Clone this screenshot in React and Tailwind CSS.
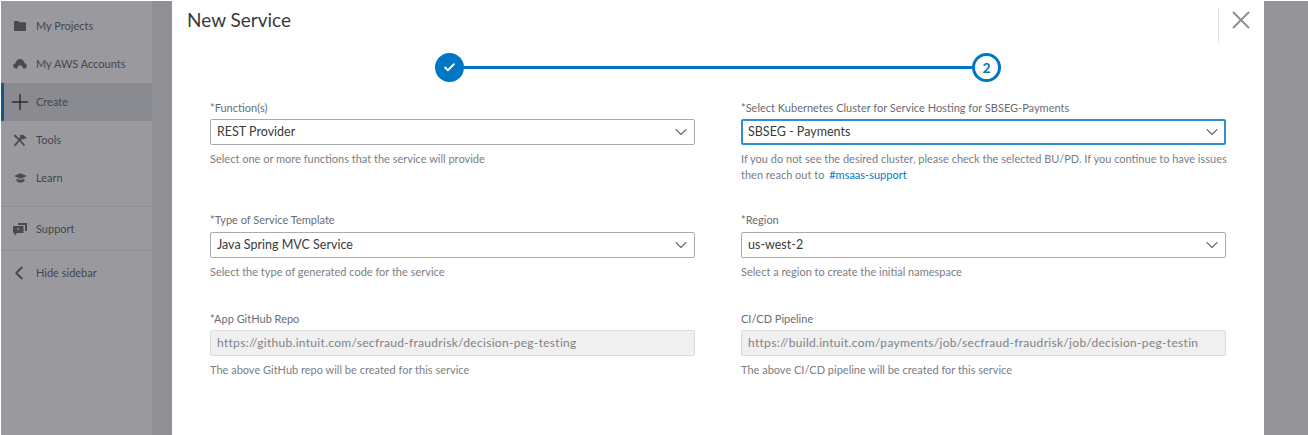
import { ChevronDown, ChevronLeft, Plus, X, Check } from 'lucide-react';

function FolderIcon() {
  return (
    <svg width="12" height="10" viewBox="0 0 12 10" className="text-[#4a4b50]">
      <path fill="currentColor" d="M0 1c0-.6.4-1 1-1h3.2l1 1.2H11c.6 0 1 .4 1 1V9c0 .6-.4 1-1 1H1c-.6 0-1-.4-1-1z" />
    </svg>
  );
}

function CloudIcon() {
  return (
    <svg width="14" height="10" viewBox="0 0 15 11" className="text-[#4a4b50]">
      <path fill="currentColor" d="M3.2 10.5C1.4 10.5 0 9.3 0 7.7 0 6.3 1 5.2 2.4 5 2.9 2.1 5 0 7.6 0c2.4 0 4.4 1.8 5 4.6 1.4.3 2.4 1.5 2.4 3 0 1.6-1.2 2.9-2.8 2.9h-1.4c0-2-1.5-3.6-3.2-3.6S4.6 8.5 4.6 10.5z" />
    </svg>
  );
}

function ToolsIcon() {
  return (
    <svg width="14" height="13" viewBox="0 0 15 14" className="text-[#4a4b50]">
      <path fill="currentColor" d="M1 1.5 2.4.5l4 4.2 1.6-1.6L6.8 1.8C8.2.6 10 .4 11.6 1.3l3 3-1.2 1.2-1.1-.6-1.3 1.3-1.1-1-1.4 1.4L13 11.8 11.6 13 6.9 7.9l-4.4 5.4L.8 12 5.7 6.5 1.5 3z" />
    </svg>
  );
}

function LearnIcon() {
  return (
    <svg width="13" height="10" viewBox="0 0 15 11" className="text-[#4a4b50]">
      <path fill="currentColor" d="M7.5 0 15 3.2 7.5 6.4 0 3.2zM3 6l4.5 1.9L12 6v3c-1 1.2-2.7 2-4.5 2S4 10.2 3 9z" />
    </svg>
  );
}

function SupportIcon() {
  return (
    <svg width="14" height="13" viewBox="0 0 14 13" className="text-[#4a4b50]">
      <path fill="currentColor" d="M5 0h9v8h-2V2H5z" />
      <path fill="currentColor" fillRule="evenodd" d="M0 3h10.5v7H4l-2.5 3v-3H0zM4.4 5.2h1.8v1.5H4.4z" />
    </svg>
  );
}

const navTop = [
  { label: 'My Projects', icon: <FolderIcon /> },
  { label: 'My AWS Accounts', icon: <CloudIcon /> },
  { label: 'Create', icon: <Plus size={26} strokeWidth={1.3} className="shrink-0 text-[#2c2d30]" />, active: true },
  { label: 'Tools', icon: <ToolsIcon /> },
  { label: 'Learn', icon: <LearnIcon /> },
];

function NavItem({ item }) {
  return (
    <div className={`flex h-[38px] items-center ${item.active ? 'border-l-[3px] border-[#0b5a8f] bg-[#8a8b90]' : 'border-l-[3px] border-transparent'}`}>
      <div className="flex w-[32px] justify-center">{item.icon}</div>
      <span className="text-[11px] text-[#45464b]">{item.label}</span>
    </div>
  );
}

function Field({ label, children, help, labelGap = 'mb-[4px]' }) {
  return (
    <div>
      <div className={`${labelGap} h-[14px] text-[11px] leading-[14px] text-[#6b6c72]`}>{label}</div>
      {children}
      <div className="mt-[6px] text-[11px] leading-[16px] text-[#7c7d83]">{help}</div>
    </div>
  );
}

function SelectBox({ value, focused }) {
  return (
    <div className={`flex h-[26px] items-center justify-between rounded-[2px] bg-white text-[12.5px] text-[#393a3d] ${focused ? 'border-2 border-[#2f8fd0] pl-[5px] pr-[2px]' : 'border border-[#a9abae] pl-[6px] pr-[3px]'}`}>
      <span>{value}</span>
      <ChevronDown size={20} strokeWidth={1.3} className="text-[#6b6c72]" />
    </div>
  );
}

function ReadOnlyBox({ value }) {
  return (
    <div className="flex h-[26px] items-center overflow-hidden whitespace-nowrap rounded-[2px] border border-[#dcdcde] bg-[#f0f0f1] pl-[6px] text-[12px] tracking-[0.3px] text-[#808186]">
      {value}
    </div>
  );
}

function Stepper() {
  return (
    <div className="flex items-center justify-center">
      <div className="flex h-[29px] w-[29px] items-center justify-center rounded-full bg-[#0077c5]">
        <Check size={13} strokeWidth={3.5} className="text-white" />
      </div>
      <div className="h-[3px] w-[508px] bg-[#0077c5]" />
      <div className="flex h-[29px] w-[29px] items-center justify-center rounded-full border-[3px] border-[#0077c5] text-[14px] font-bold text-[#0077c5]">2</div>
    </div>
  );
}

export default function App() {
  return (
    <div className="flex h-[435px] w-[1308px] overflow-hidden border-l border-t border-white bg-[#949498] font-['Lato',sans-serif]">
      <aside className="flex w-[171px] shrink-0 bg-[#8f9095]">
        <div className="w-[151px] bg-[#9a9a9e] pt-[6px]">
          {navTop.map((item) => (
            <NavItem key={item.label} item={item} />
          ))}
          <div className="mt-[9px] border-t border-[#8f9095] pt-[3px]">
            <NavItem item={{ label: 'Support', icon: <SupportIcon /> }} />
          </div>
          <div className="mt-[2px] border-t border-[#8f9095] pt-[3px]">
            <NavItem item={{ label: 'Hide sidebar', icon: <ChevronLeft size={22} strokeWidth={2} className="-ml-[2px] shrink-0 text-[#45464b]" /> }} />
          </div>
        </div>
      </aside>

      <main className="w-[1092px] shrink-0 bg-white">
        <div className="flex h-[52px] items-start justify-between pl-[15px] pt-[8px]">
          <h1 className="text-[19px] leading-[22px] text-[#393a3d]">New Service</h1>
          <div className="-mt-[2px] flex h-[36px] w-[46px] items-start border-l border-[#e4e4e6] pl-[7px]">
            <X size={30} strokeWidth={1.5} className="-mt-[2px] shrink-0 text-[#8d9096]" />
          </div>
        </div>
        <Stepper />
        <div className="mt-[19px] grid grid-cols-[485px_485px] gap-x-[46px] pl-[38px]">
          <div className="h-[112px]">
            <Field label="*Function(s)" help="Select one or more functions that the service will provide">
              <SelectBox value="REST Provider" />
            </Field>
          </div>
          <div className="h-[112px]">
            <Field
              label="*Select Kubernetes Cluster for Service Hosting for SBSEG-Payments"
              help={
                <>
                  <span className="whitespace-nowrap">If you do not see the desired cluster, please check the selected BU/PD. If you continue to have issues</span>
                  <br />
                  then reach out to <span className="ml-[2px] text-[#0077c5]">#msaas-support</span>
                </>
              }
            >
              <SelectBox value="SBSEG - Payments" focused />
            </Field>
          </div>
          <div className="h-[99px]">
            <Field label="*Type of Service Template" labelGap="mb-[5px]" help="Select the type of generated code for the service">
              <SelectBox value="Java Spring MVC Service" />
            </Field>
          </div>
          <div className="h-[99px]">
            <Field label="*Region" labelGap="mb-[5px]" help="Select a region to create the initial namespace">
              <SelectBox value="us-west-2" />
            </Field>
          </div>
          <Field label="*App GitHub Repo" help="The above GitHub repo will be created for this service">
            <ReadOnlyBox value="https://github.intuit.com/secfraud-fraudrisk/decision-peg-testing" />
          </Field>
          <Field label="CI/CD Pipeline" help="The above CI/CD pipeline will be created for this service">
            <ReadOnlyBox value="https://build.intuit.com/payments/job/secfraud-fraudrisk/job/decision-peg-testin" />
          </Field>
        </div>
      </main>
    </div>
  );
}
